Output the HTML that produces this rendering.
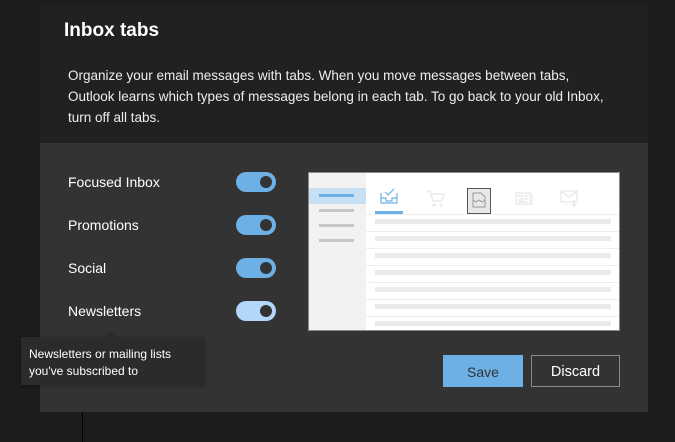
<!DOCTYPE html>
<html><head><meta charset="utf-8"><style>
*{margin:0;padding:0;box-sizing:border-box}
body{width:675px;height:442px;background:#1c1c1c;font-family:"Segoe UI","Liberation Sans",sans-serif;overflow:hidden;position:relative;color:#fff}
.a{position:absolute}
.top{left:40px;top:5px;width:608px;height:138px;background:#212121}
.bot{left:40px;top:143px;width:608px;height:269px;background:#333}
h1{position:absolute;left:64px;top:20px;font-size:19px;font-weight:bold;color:#fff}
.p{left:68px;top:65px;font-size:13.5px;line-height:21px;color:#eee;white-space:nowrap}
.lbl{left:68px;top:0;font-size:14px;color:#fff}
.tg{left:236px;width:40px;height:20px;border-radius:10px;background:#6cb0e6}
.tg::after{content:"";position:absolute;right:4px;top:4px;width:12px;height:12px;border-radius:50%;background:#333}
.gl{height:4px;background:#c8c6c4;left:319px;width:35px}
.ml{height:5px;background:#ebebeb;left:375px;width:236px}
.sep{height:1px;background:#eee;left:366px;width:253px}
</style></head><body>
<div class="a" style="left:82px;top:412px;width:1px;height:30px;background:#000"></div>
<div class="a top"></div>
<div class="a bot"></div>
<h1>Inbox tabs</h1>
<div class="a p">Organize your email messages with tabs. When you move messages between tabs,<br>Outlook learns which types of messages belong in each tab. To go back to your old Inbox,<br>turn off all tabs.</div>

<div class="a lbl" style="top:174px">Focused Inbox</div>
<div class="a lbl" style="top:217px">Promotions</div>
<div class="a lbl" style="top:260px">Social</div>
<div class="a lbl" style="top:303px">Newsletters</div>
<div class="a tg" style="top:172px"></div>
<div class="a tg" style="top:215px"></div>
<div class="a tg" style="top:258px"></div>
<div class="a tg" style="top:301px;background:#b3d6fb"></div>

<div class="a" style="left:308px;top:172px;width:312px;height:159px;background:#fff;border:1px solid #8a8a8a"></div>
<div class="a" style="left:309px;top:173px;width:57px;height:157px;background:#f3f2f1"></div>
<div class="a" style="left:309px;top:188px;width:57px;height:16px;background:#c7e0f4"></div>
<div class="a gl" style="top:194px;background:#6cb0e6;height:3px"></div>
<div class="a gl" style="top:209px;height:3px"></div>
<div class="a gl" style="top:224px;height:3px"></div>
<div class="a gl" style="top:239px;height:3px"></div>

<svg class="a" style="left:375px;top:186px" width="260" height="30" viewBox="0 0 260 30">
<g fill="none" stroke="#6cb0e6" stroke-width="1.2"><path d="M6 7v10h16V7M6 12h5v3h6v-3h5M10 6l3 3 6-6"/></g>
<g fill="none" stroke="#e6e6e6" stroke-width="1.2"><path d="M52 5h3l3 10h9l2-7H56M59 18a1 1 0 1 0 .1 0M66 18a1 1 0 1 0 .1 0"/></g>
<rect x="92.5" y="2.5" width="23" height="25" fill="#e8e8e8" stroke="#555"/>
<g fill="none" stroke="#999" stroke-width="1"><path d="M98 7h8l4 4v10H98zM98 14l3 2 3-2 3 2 3-2"/></g>
<g fill="none" stroke="#e6e6e6" stroke-width="1.2"><path d="M141 7h14v11h-14zM143 10h4v4h-4M149 10h4M149 13h4M143 16h10M155 9h2v9h-2"/></g>
<g fill="none" stroke="#e6e6e6" stroke-width="1.2"><path d="M186 5h16v11h-16zM186 5l8 6 8-6M199 14v6M197 18l2 2 2-2"/></g>
<rect x="0" y="25" width="28" height="3" fill="#6cb0e6"/>
</svg>
<div class="a sep" style="top:214px"></div>
<div class="a ml" style="top:219px"></div>
<div class="a sep" style="top:231px"></div>
<div class="a ml" style="top:236px"></div>
<div class="a sep" style="top:248px"></div>
<div class="a ml" style="top:253px"></div>
<div class="a sep" style="top:265px"></div>
<div class="a ml" style="top:270px"></div>
<div class="a sep" style="top:282px"></div>
<div class="a ml" style="top:287px"></div>
<div class="a sep" style="top:299px"></div>
<div class="a ml" style="top:304px"></div>
<div class="a sep" style="top:316px"></div>
<div class="a ml" style="top:321px"></div>

<div class="a" style="left:21px;top:337px;width:184px;height:48px;background:#2b2b2b;box-shadow:0 1px 3px rgba(0,0,0,.3)"></div>
<div class="a" style="left:104px;top:331px;width:0;height:0;border-left:7px solid transparent;border-right:7px solid transparent;border-bottom:6px solid #2b2b2b"></div>
<div class="a" style="left:29px;top:346px;font-size:12px;line-height:17px;color:#fff">Newsletters or mailing lists<br>you've subscribed to</div>

<div class="a" style="left:443px;top:355px;width:80px;height:32px;background:#6cb0e6;color:#333;font-size:14px;text-align:center;line-height:34px">Save</div>
<div class="a" style="left:531px;top:355px;width:89px;height:32px;border:1px solid #8a8a8a;color:#fff;font-size:14.5px;text-align:center;line-height:33px">Discard</div>
</body></html>
